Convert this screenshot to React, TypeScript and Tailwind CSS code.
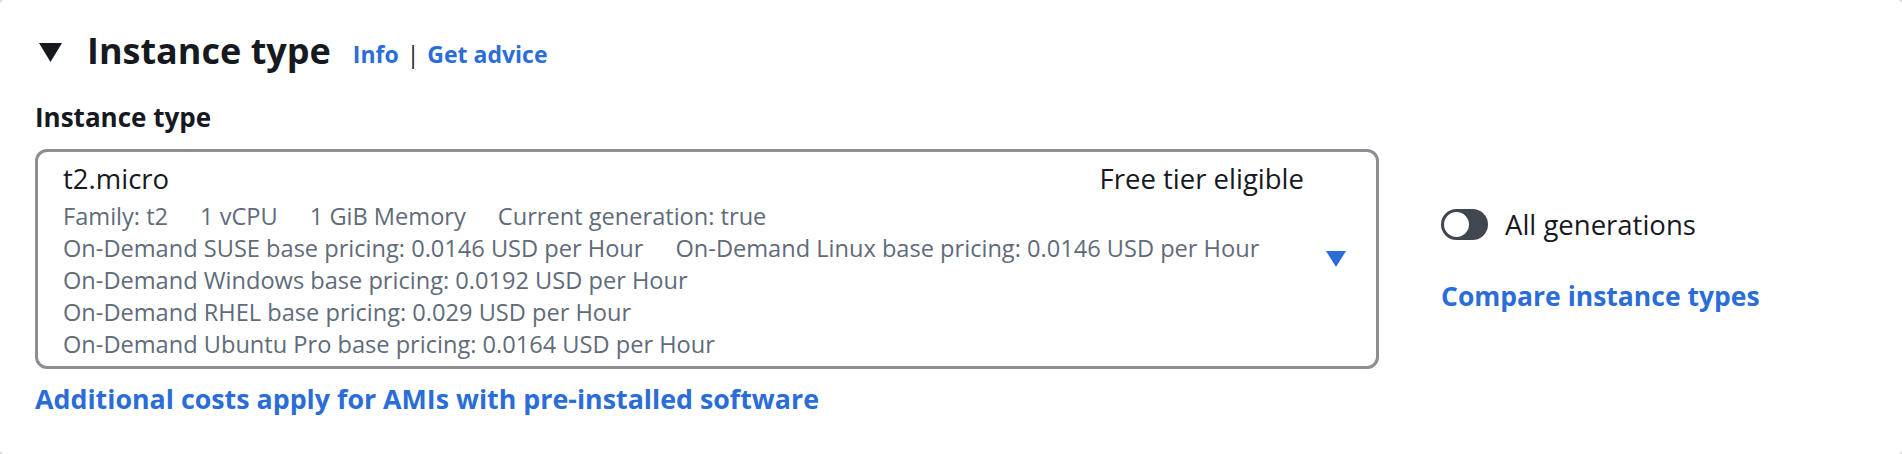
import React from "react";

const Tag = ({ children }: { children: React.ReactNode }) => <span className="whitespace-nowrap">{children}</span>;

export default function App() {
  return (
    <div className="h-[454px] w-[1902px] overflow-hidden bg-white font-['Open_Sans',sans-serif] text-[#16191f]">
      <div className="-ml-[8px] -mt-[8px] h-[470px] w-[1918px] rounded-[28px] border-2 border-[#dcdce0] pl-[41px] pt-[35px]">
        {/* header */}
        <div className="flex h-[44px] items-center">
          <svg width="23" height="19" viewBox="0 0 23 19" className="ml-[4px] mt-[2px] shrink-0">
            <path d="M0 0 H23 L11.5 19 Z" fill="#16191f" />
          </svg>
          <h2 className="ml-[25px] text-[36px] font-bold leading-[44px]">Instance type</h2>
          <div className="ml-[22px] mt-[6px] flex items-center text-[23px] font-bold leading-[31px]">
            <span className="text-[#2b6dd8]">Info</span>
            <span className="mx-[8px] font-normal text-[#16191f]">|</span>
            <span className="text-[#2b6dd8]">Get advice</span>
          </div>
        </div>

        {/* label */}
        <div className="mt-[29px] text-[26px] font-bold leading-[31.5px]">Instance type</div>

        <div className="mt-[15px] flex items-start">
          <div className="flex flex-col">
            {/* select box */}
            <div className="flex h-[220px] w-[1344px] items-center rounded-[12px] border-[3px] border-[#8d8d94] pl-[25px] pr-[30px]">
              <div className="flex flex-1 flex-col pt-[4px]">
                <div className="flex justify-between pr-[20px] text-[27.5px] leading-[35px] text-[#16191f]">
                  <span>t2.micro</span>
                  <span>Free tier eligible</span>
                </div>
                <div className="mt-[4px] flex flex-col text-[23.6px] leading-[32px] text-[#5f6b7a]">
                  <div className="flex gap-[32px]">
                    <Tag>Family: t2</Tag>
                    <Tag>1 vCPU</Tag>
                    <Tag>1 GiB Memory</Tag>
                    <Tag>Current generation: true</Tag>
                  </div>
                  <div className="flex gap-[32px]">
                    <Tag>On-Demand SUSE base pricing: 0.0146 USD per Hour</Tag>
                    <Tag>On-Demand Linux base pricing: 0.0146 USD per Hour</Tag>
                  </div>
                  <div className="flex gap-[32px]">
                    <Tag>On-Demand Windows base pricing: 0.0192 USD per Hour</Tag>
                  </div>
                  <div className="flex gap-[32px]">
                    <Tag>On-Demand RHEL base pricing: 0.029 USD per Hour</Tag>
                  </div>
                  <div className="flex gap-[32px]">
                    <Tag>On-Demand Ubuntu Pro base pricing: 0.0164 USD per Hour</Tag>
                  </div>
                </div>
              </div>
              <svg width="20" height="16" viewBox="0 0 20 16" className="ml-[2px] shrink-0">
                <path d="M0 0 H20 L10 16 Z" fill="#2b6dd8" />
              </svg>
            </div>
            <div className="mt-[14px] text-[26.8px] font-bold leading-[31.5px] text-[#2b6dd8]">
              Additional costs apply for AMIs with pre-installed software
            </div>
          </div>

          {/* right column */}
          <div className="ml-[62px] mt-[60px] flex flex-col">
            <div className="flex items-center">
              <div className="flex h-[31px] w-[47px] items-center rounded-full bg-[#414750] px-[3px]">
                <div className="h-[25px] w-[25px] rounded-full bg-white" />
              </div>
              <span className="ml-[17px] text-[27.5px] leading-[31.5px] text-[#16191f]">All generations</span>
            </div>
            <div className="mt-[41px] text-[26.5px] font-bold leading-[31.5px] text-[#2b6dd8]">Compare instance types</div>
          </div>
        </div>
      </div>
    </div>
  );
}
